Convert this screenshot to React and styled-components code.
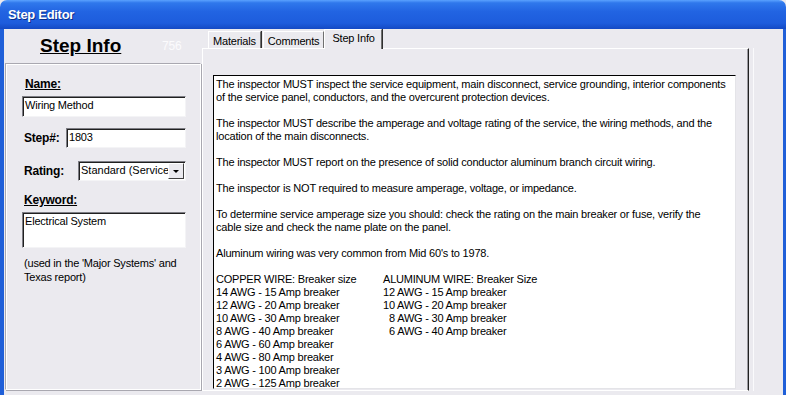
import React from "react";
import styled, { createGlobalStyle } from "styled-components";

const GlobalStyle = createGlobalStyle`
  html, body {
    margin: 0;
    padding: 0;
    overflow: hidden;
    background: #ebeaef;
  }
`;

const Window = styled.div`
  width: 786px;
  height: 395px;
  display: flex;
  flex-direction: column;
  font-family: "Liberation Sans", Arial, sans-serif;
  letter-spacing: -0.2px;
  color: #000;
  overflow: hidden;
`;

const TitleBar = styled.div`
  height: 29px;
  flex: none;
  display: flex;
  align-items: center;
  padding-left: 8px;
  border-radius: 7px 7px 0 0;
  background: linear-gradient(
    #5aa2ff 0%,
    #2f78ec 10%,
    #2264e2 40%,
    #1d5cdc 80%,
    #1449c4 100%
  );
  color: #fff;
  font-size: 13px;
  font-weight: bold;
  letter-spacing: -0.3px;
  text-shadow: 1px 1px 0 #0c2f8a;
`;

const Body = styled.div`
  flex: 1;
  display: flex;
  background: #ebeaef;
  border-left: 4px solid #1f5fd8;
  border-right: 3px solid #1f5fd8;
`;

const LeftPane = styled.div`
  width: 198px;
  flex: none;
  display: flex;
  flex-direction: column;
`;

const Header = styled.div`
  height: 34px;
  display: flex;
  align-items: center;
  padding-left: 36px;
`;

const BigTitle = styled.span`
  font-size: 19px;
  font-weight: bold;
  letter-spacing: 0;
  text-decoration: underline;
  width: 122px;
`;

const Faint = styled.span`
  color: #fbfbfd;
  font-size: 12px;
`;

const Group = styled.div`
  margin-left: 1px;
  width: 196px;
  height: 327px;
  box-sizing: border-box;
  border-top: 1px solid #a9a8b0;
  border-left: 1px solid #a9a8b0;
  border-right: 1px solid #ffffff;
  border-bottom: 1px solid #ffffff;
  box-shadow: inset 1px 1px 0 #ffffff, 1px 1px 0 #a9a8b0;
  padding: 0 0 0 16px;
  display: flex;
  flex-direction: column;
`;

const Label = styled.span`
  font-size: 12px;
  font-weight: bold;
  text-decoration: ${(p) => (p.$underline ? "underline" : "none")};
  padding-left: ${(p) => p.$indent || 0}px;
`;

const Field = styled.div`
  box-sizing: border-box;
  width: ${(p) => p.$w}px;
  height: ${(p) => p.$h}px;
  background: #fff;
  border-top: 1px solid #7d7d84;
  border-left: 1px solid #7d7d84;
  border-right: 1px solid #f4f4f6;
  border-bottom: 1px solid #f4f4f6;
  box-shadow: inset 1px 1px 0 #202020;
  font-size: 11px;
  letter-spacing: ${(p) => (p.$select ? "0" : "-0.2px")};
  padding: 2px 0 0 2px;
  white-space: nowrap;
  overflow: hidden;
  position: relative;
`;

const Row = styled.div`
  display: flex;
  align-items: center;
  justify-content: space-between;
  width: 164px;
  margin-top: ${(p) => p.$mt}px;
`;

const DropButton = styled.div`
  position: absolute;
  right: 1px;
  top: 1px;
  width: 16px;
  height: 16px;
  box-sizing: border-box;
  background: #ebeaef;
  border-top: 1px solid #fff;
  border-left: 1px solid #fff;
  border-right: 1px solid #404040;
  border-bottom: 1px solid #404040;
  display: flex;
  align-items: center;
  justify-content: center;
  &::after {
    content: "";
    border-left: 3px solid transparent;
    border-right: 3px solid transparent;
    border-top: 3px solid #000;
  }
`;

const Note = styled.div`
  font-size: 11px;
  line-height: 14px;
  margin: 8px 0 0 2px;
`;

const TabArea = styled.div`
  flex: 1;
  display: flex;
  flex-direction: column;
`;

const TabStrip = styled.div`
  height: 19px;
  display: flex;
  align-items: flex-end;
  padding-left: 6px;
  position: relative;
  z-index: 1;
`;

const Tab = styled.div`
  box-sizing: border-box;
  height: ${(p) => (p.$active ? 20 : 17)}px;
  margin-bottom: ${(p) => (p.$active ? -1 : 0)}px;
  margin-left: ${(p) => (p.$active ? 0 : 2)}px;
  padding: ${(p) => (p.$active ? "1px 6px 0 7px" : "2px 4px 0")};
  background: #ebeaef;
  border-top: 1px solid #fff;
  border-left: 1px solid #fff;
  border-right: 1px solid #707070;
  box-shadow: 1px 0 0 #303030;
  font-size: 11px;
  line-height: 14px;
  &:first-child {
    margin-left: 0;
  }
`;

const PaneRow = styled.div`
  display: flex;
  flex: 1;
`;

const TabPane = styled.div`
  width: 547px;
  height: 343px;
  box-sizing: border-box;
  border-top: 1px solid #fff;
  border-left: 1px solid #fff;
  border-right: 1px solid #202020;
  border-bottom: 1px solid #fff;
  box-shadow: inset -1px 0 0 #9a99a0;
  padding: 26px 0 0 10px;
`;

const Gutter = styled.div`
  margin-left: 4px;
  border-left: 1px solid #fafafc;
  height: 343px;
`;

const TextBox = styled.div`
  box-sizing: border-box;
  width: 523px;
  height: 314px;
  background: #fff;
  border-top: 1px solid #000;
  border-left: 1px solid #000;
  border-right: 1px solid #e4e4e8;
  border-bottom: 1px solid #e4e4e8;
  padding: 2px 0 0 2px;
  font-size: 11px;
  line-height: 13px;
  overflow: hidden;
`;

const Para = styled.p`
  margin: 0 0 13px;
  white-space: nowrap;
`;

const Table = styled.div`
  display: grid;
  grid-template-columns: 167px auto;
`;

const Cell = styled.div`
  padding-left: ${(p) => p.$indent || 0}px;
  white-space: nowrap;
`;

const copper = [
  "COPPER WIRE: Breaker size",
  "14 AWG - 15 Amp breaker",
  "12 AWG - 20 Amp breaker",
  "10 AWG - 30 Amp breaker",
  "8 AWG - 40 Amp breaker",
  "6 AWG - 60 Amp breaker",
  "4 AWG - 80 Amp breaker",
  "3 AWG - 100 Amp breaker",
  "2 AWG - 125 Amp breaker",
];

const aluminum = [
  ["ALUMINUM WIRE: Breaker Size", 0],
  ["12 AWG - 15 Amp breaker", 0],
  ["10 AWG - 20 Amp breaker", 0],
  ["8 AWG - 30 Amp breaker", 6],
  ["6 AWG - 40 Amp breaker", 6],
];

// wrapped the way the original memo control wraps them
const paragraphs = [
  [
    "The inspector MUST inspect the service equipment, main disconnect, service grounding, interior components",
    "of the service panel, conductors, and the overcurent protection devices.",
  ],
  [
    "The inspector MUST describe the amperage and voltage rating of the service, the wiring methods, and the",
    "location of the main disconnects.",
  ],
  ["The inspector MUST report on the presence of solid conductor aluminum branch circuit wiring."],
  ["The inspector is NOT required to measure amperage, voltage, or impedance."],
  [
    "To determine service amperage size you should: check the rating on the main breaker or fuse, verify the",
    "cable size and check the name plate on the panel.",
  ],
  ["Aluminum wiring was very common from Mid 60's to 1978."],
];

export default function App() {
  return (
    <Window>
      <GlobalStyle />
      <TitleBar>Step Editor</TitleBar>
      <Body>
        <LeftPane>
          <Header>
            <BigTitle>Step Info</BigTitle>
            <Faint>756</Faint>
          </Header>
          <Group>
            <Label $underline $indent={3} style={{ marginTop: 13 }}>
              Name:
            </Label>
            <Field $w={164} $h={21} style={{ marginTop: 5 }}>
              Wiring Method
            </Field>
            <Row $mt={11}>
              <Label $indent={2}>Step#:</Label>
              <Field $w={120} $h={20}>1803</Field>
            </Row>
            <Row $mt={13}>
              <Label $indent={2}>Rating:</Label>
              <Field $w={108} $h={20} $select>
                Standard (Service)
                <DropButton />
              </Field>
            </Row>
            <Label $underline $indent={2} style={{ marginTop: 12 }}>
              Keyword:
            </Label>
            <Field $w={164} $h={36} style={{ marginTop: 5 }}>
              Electrical System
            </Field>
            <Note>
              (used in the 'Major Systems' and
              <br />
              Texas report)
            </Note>
          </Group>
        </LeftPane>
        <TabArea>
          <TabStrip>
            <Tab>Materials</Tab>
            <Tab>Comments</Tab>
            <Tab $active>Step Info</Tab>
          </TabStrip>
          <PaneRow>
            <TabPane>
              <TextBox>
                {paragraphs.map((lines) => (
                  <Para key={lines[0]}>
                    {lines.map((l, i) => (
                      <React.Fragment key={l}>
                        {i > 0 && <br />}
                        {l}
                      </React.Fragment>
                    ))}
                  </Para>
                ))}
                <Table>
                  <div>
                    {copper.map((c) => (
                      <Cell key={c}>{c}</Cell>
                    ))}
                  </div>
                  <div>
                    {aluminum.map(([a, ind]) => (
                      <Cell key={a} $indent={ind}>
                        {a}
                      </Cell>
                    ))}
                  </div>
                </Table>
              </TextBox>
            </TabPane>
            <Gutter />
          </PaneRow>
        </TabArea>
      </Body>
    </Window>
  );
}
